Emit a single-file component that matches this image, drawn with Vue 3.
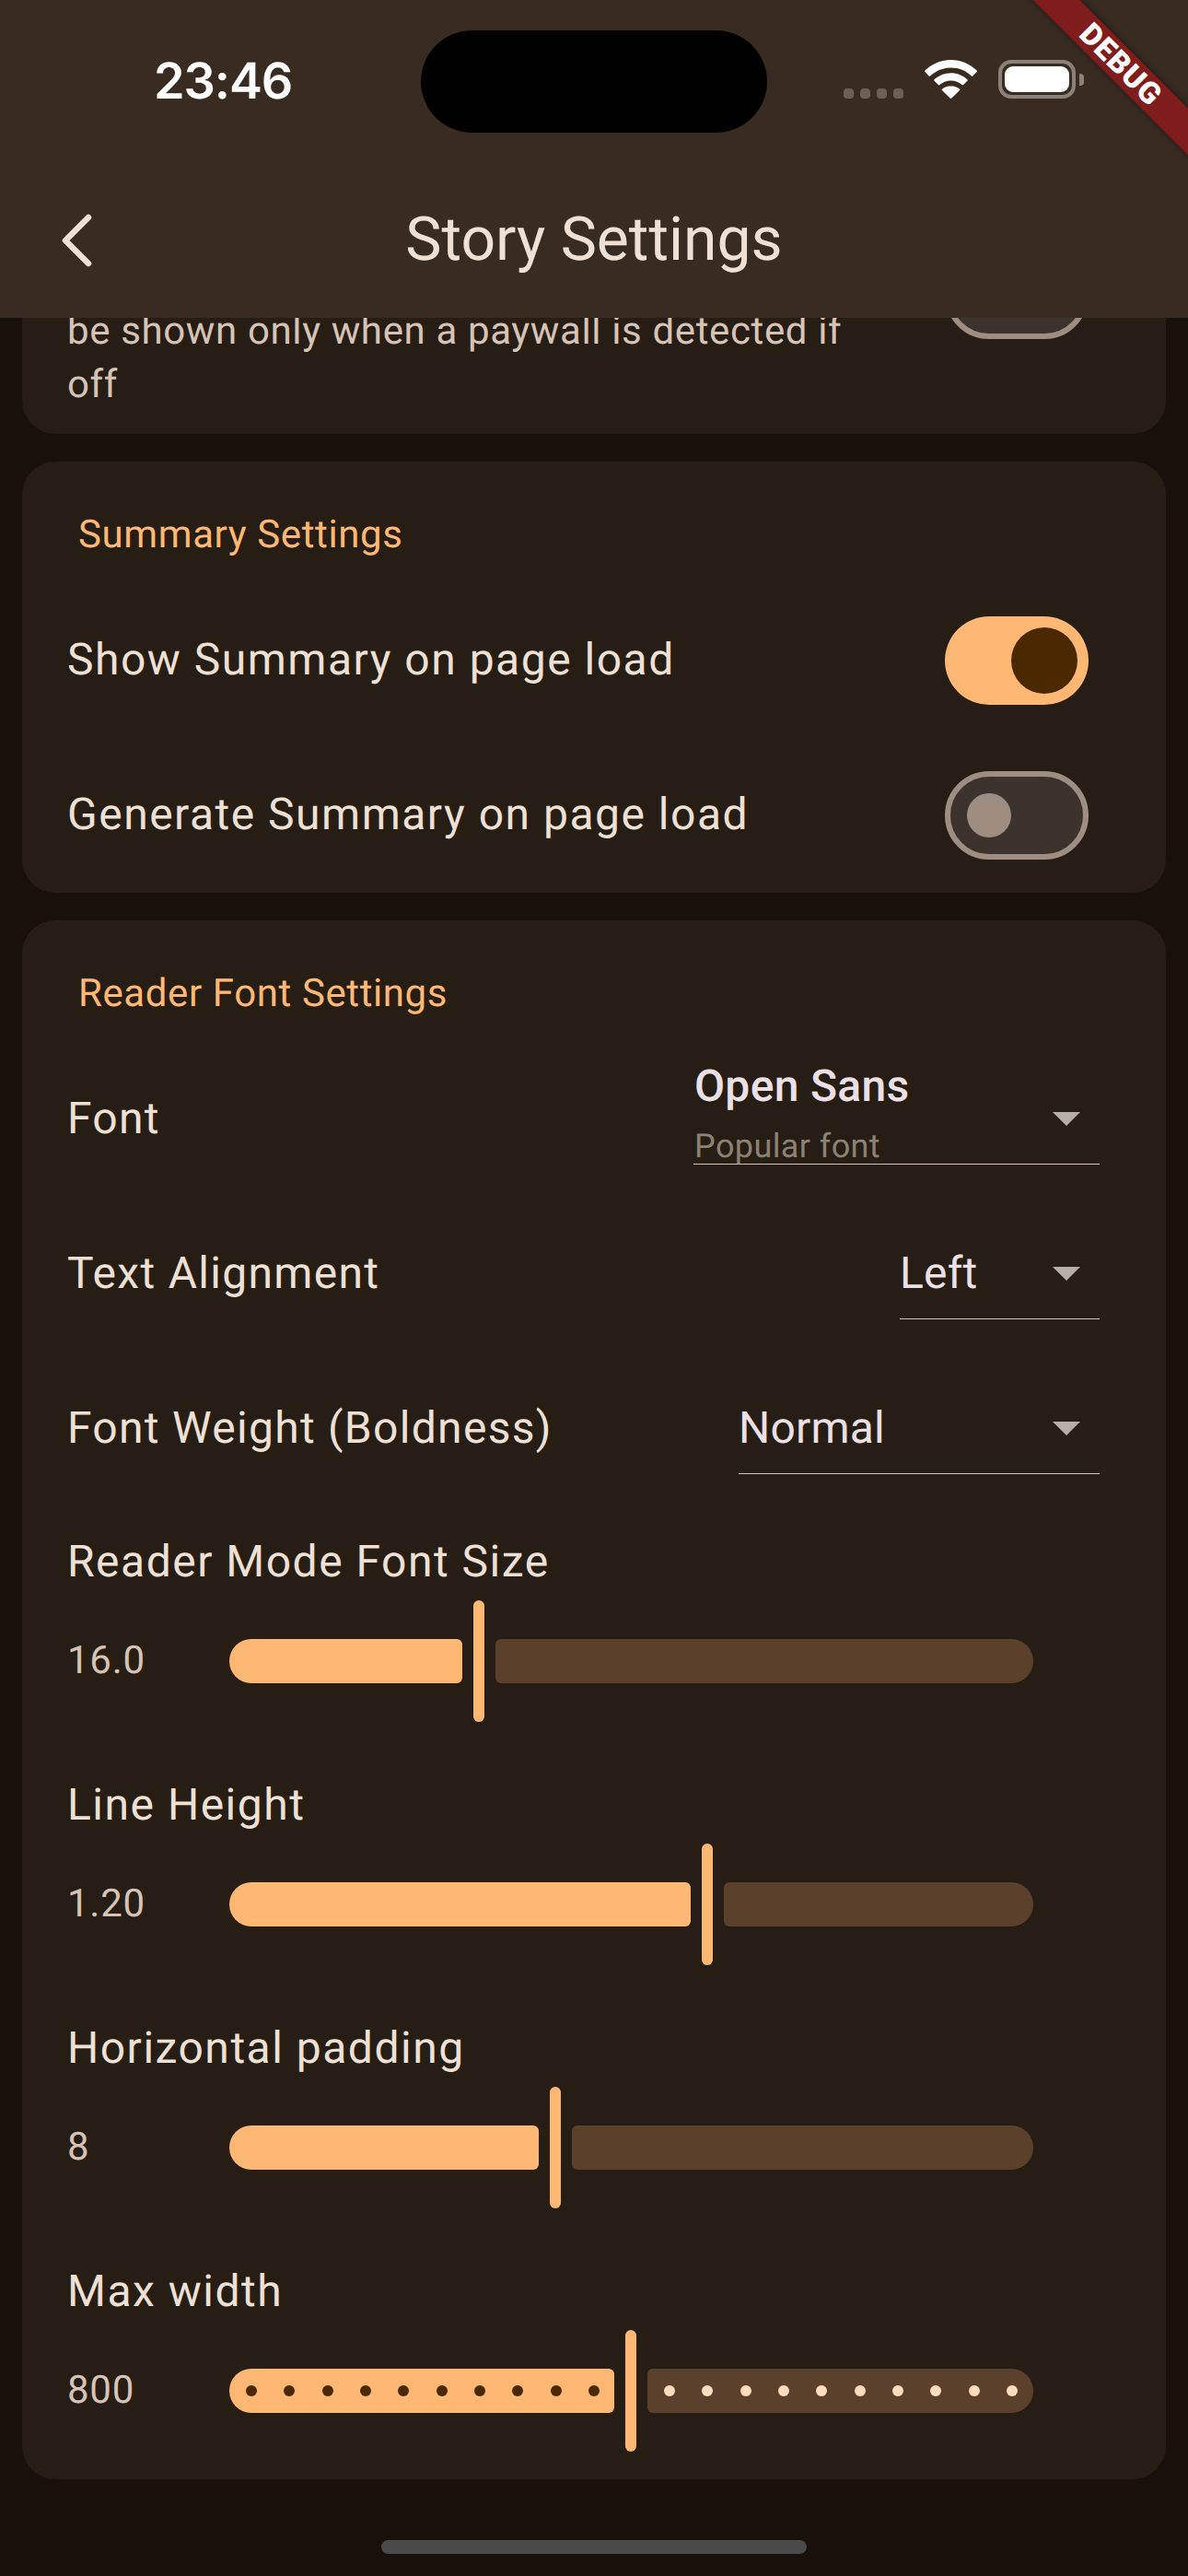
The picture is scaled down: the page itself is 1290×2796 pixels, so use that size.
<template>
  <div class="phone">
    <header class="appbar">
      <div class="statusbar">
        <span class="time">23:46</span>
        <div class="island"></div>
        <div class="status-icons">
          <div class="signal">
            <i v-for="n in 4" :key="n"></i>
          </div>
          <svg class="wifi" width="57" height="42" viewBox="0 0 57 42">
            <path fill="#fff" d="M28.5 0C17.6 0 7.8 4.3.4 11.5c-.5.5-.5 1 0 1.500l4.200 4.400c.4.400 1 .4 1.500 0C12 11.800 19.900 8.500 28.500 8.500s16.500 3.300 22.400 8.900c.5.4 1.100.4 1.500 0l4.200-4.400c.5-.5.500-1 0-1.500C49.200 4.300 39.400 0 28.500 0z" />
            <path fill="#fff" d="M28.500 14.200c-6.900 0-13.200 2.700-17.900 7-.5.500-.5 1 0 1.500l4.300 4.400c.4.400 1 .4 1.500 0 3.200-2.900 7.400-4.600 12.100-4.600s8.900 1.700 12.100 4.600c.5.400 1.100.4 1.500 0l4.300-4.400c.5-.5.500-1 0-1.500-4.700-4.300-11-7-17.900-7z" />
            <path fill="#fff" d="M28.500 28.200c-3.700 0-7 1.300-9.600 3.500-.5.4-.5 1 0 1.400l8.700 8.500c.5.500 1.300.5 1.800 0l8.700-8.500c.5-.4.500-1 0-1.400-2.600-2.200-5.900-3.500-9.600-3.500z" />
          </svg>
          <div class="battery">
            <div class="battery-body"><div class="battery-fill"></div></div>
            <div class="battery-cap"></div>
          </div>
        </div>
      </div>
      <div class="titlebar">
        <svg class="back" width="36" height="62" viewBox="0 0 36 62">
          <path d="M31 6 L6 31 L31 56" fill="none" stroke="#f0e0d4" stroke-width="6.500" stroke-linecap="round" stroke-linejoin="round" />
        </svg>
        <h1 class="title">Story Settings</h1>
      </div>
    </header>

    <main class="scroller">
      <div class="list">
        <section class="card card-clipped">
          <p class="subtitle">be shown only when a paywall is detected if off</p>
          <div class="switch off switch-clipped"><span class="thumb"></span></div>
        </section>

        <section class="card">
          <h2 class="section-title">Summary Settings</h2>
          <div class="row" v-for="item in summaryRows" :key="item.label">
            <span class="label">{{ item.label }}</span>
            <div class="switch" :class="item.on ? 'on' : 'off'"><span class="thumb"></span></div>
          </div>
        </section>

        <section class="card">
          <h2 class="section-title">Reader Font Settings</h2>

          <div class="row row-select">
            <span class="label">Font</span>
            <div class="select select-font">
              <div class="select-text">
                <span class="select-name">Open Sans</span>
                <span class="select-hint">Popular font</span>
              </div>
              <span class="caret"></span>
            </div>
          </div>
          <div class="row row-select">
            <span class="label">Text Alignment</span>
            <div class="select select-align">
              <span class="select-value">Left</span>
              <span class="caret"></span>
            </div>
          </div>
          <div class="row row-select">
            <span class="label">Font Weight (Boldness)</span>
            <div class="select select-weight">
              <span class="select-value">Normal</span>
              <span class="caret"></span>
            </div>
          </div>

          <div class="sliders">
            <div class="slider-block" v-for="s in sliders" :key="s.label">
              <div class="label">{{ s.label }}</div>
              <div class="slider-row">
                <span class="value">{{ s.value }}</span>
                <div class="slider">
                  <div class="track active" :style="{ width: s.active + 'px' }">
                    <i v-for="n in s.dots" :key="n"></i>
                  </div>
                  <div class="handle"></div>
                  <div class="track rest">
                    <i v-for="n in s.dots" :key="n"></i>
                  </div>
                </div>
              </div>
            </div>
          </div>
        </section>
      </div>
    </main>

    <div class="home-bar"></div>
    <div class="debug-banner"><span>DEBUG</span></div>
  </div>
</template>

<script setup>
const summaryRows = [
  { label: 'Show Summary on page load', on: true },
  { label: 'Generate Summary on page load', on: false }
]

const sliders = [
  { label: 'Reader Mode Font Size', value: '16.0', active: 253, dots: 0 },
  { label: 'Line Height', value: '1.20', active: 501, dots: 0 },
  { label: 'Horizontal padding', value: '8', active: 336, dots: 0 },
  { label: 'Max width', value: '800', active: 418, dots: 10 }
]
</script>

<style>
html, body {
  margin: 0;
  background: #18110b;
}
</style>

<style scoped>
.phone {
  position: relative;
  width: 1290px;
  height: 2796px;
  overflow: hidden;
  display: flex;
  flex-direction: column;
  background: #18110b;
  font-family: Roboto, "Noto Sans", sans-serif;
  color: #efe0d5;
  text-rendering: geometricPrecision;
}

.appbar {
  height: 345px;
  flex: none;
  background: #382c22;
  position: relative;
  z-index: 2;
}

.statusbar {
  height: 177px;
  padding: 33px 113px 0 167px;
  box-sizing: border-box;
  display: flex;
  align-items: flex-start;
}

.time {
  width: 290px;
  margin-top: 23px;
  font-family: Inter, sans-serif;
  font-size: 54px;
  line-height: 66px;
  font-weight: 600;
  letter-spacing: -1.1px;
  color: #fff;
}

.island {
  width: 376px;
  height: 111px;
  border-radius: 56px;
  background: #000;
  flex: none;
}

.status-icons {
  display: flex;
  align-items: flex-end;
  margin: 32px 0 0 83px;
  height: 42px;
}

.signal {
  display: flex;
  gap: 7px;
  width: 88px;
}

.signal i {
  width: 11px;
  height: 11px;
  border-radius: 4px;
  background: #6a6058;
}

.wifi {
  display: block;
  margin-right: 23px;
}

.battery {
  display: flex;
  align-items: center;
  height: 42px;
}

.battery-body {
  width: 84px;
  height: 42px;
  box-sizing: border-box;
  border: 4px solid #8a827a;
  border-radius: 14px;
  padding: 3px;
}

.battery-fill {
  height: 100%;
  background: #fff;
  border-radius: 9px;
}

.battery-cap {
  width: 5px;
  height: 13px;
  margin-left: 4px;
  background: #8a827a;
  border-radius: 0 4px 4px 0;
}

.titlebar {
  height: 168px;
  position: relative;
  display: flex;
  align-items: center;
  justify-content: center;
}

.back {
  position: absolute;
  left: 65px;
  top: 53px;
}

.title {
  margin: 0;
  font-size: 66px;
  line-height: 88px;
  font-weight: 400;
  color: #f0e0d4;
}

.scroller {
  flex: 1;
  overflow: hidden;
}

.list {
  margin-top: -113px;
  padding: 0 24px;
  display: flex;
  flex-direction: column;
  gap: 30px;
}

.card {
  background: #261d14;
  border-radius: 36px;
}

.card-clipped {
  height: 238.67px;
  padding: 99px 84px 0 49px;
  box-sizing: border-box;
  display: flex;
  justify-content: space-between;
  align-items: flex-start;
}

.subtitle {
  margin: 0;
  width: 860px;
  font-size: 42px;
  line-height: 58px;
  letter-spacing: 0.63px;
  color: #d6c3b5;
}

.switch-clipped {
  margin-top: -59px;
}

.section-title {
  margin: 0;
  padding: 53px 0 0 61px;
  height: 79px;
  font-size: 42px;
  line-height: 54px;
  font-weight: 400;
  letter-spacing: 0.6px;
  color: #ffb874;
}

.row {
  height: 168px;
  padding: 0 84px 0 49px;
  display: flex;
  align-items: center;
  justify-content: space-between;
}

.label {
  font-size: 48px;
  line-height: 64px;
  padding-bottom: 2px;
  letter-spacing: 1.5px;
  color: #efe0d5;
}

.row-select .label {
  letter-spacing: 1.3px;
}

.switch {
  width: 156px;
  height: 96px;
  box-sizing: border-box;
  border-radius: 48px;
  flex: none;
  display: flex;
  align-items: center;
}

.switch.on {
  background: #ffb874;
  justify-content: flex-end;
  padding-right: 12px;
}

.switch.on .thumb {
  width: 72px;
  height: 72px;
  background: #4a2800;
}

.switch.off {
  background: #3c332c;
  border: 6px solid #9e8e81;
  padding-left: 18px;
}

.switch.off .thumb {
  width: 48px;
  height: 48px;
  background: #9e8e81;
}

.thumb {
  border-radius: 50%;
}

.row-select {
  padding-right: 72px;
}

.select {
  height: 98px;
  box-sizing: border-box;
  border-bottom: 1px solid #d6c3b5;
  display: flex;
  align-items: center;
  justify-content: space-between;
  padding-right: 21px;
  color: #ebe0e6;
}

.select-font {
  width: 441px;
  padding-left: 1px;
}

.select-align {
  width: 217px;
}

.select-weight {
  width: 392px;
}

.select-text {
  display: flex;
  flex-direction: column;
  margin-top: -5px;
}

.select-name {
  font-size: 48px;
  line-height: 64px;
  font-weight: 500;
  letter-spacing: 0.3px;
}

.select-hint {
  font-size: 36px;
  line-height: 66px;
  letter-spacing: 0.4px;
  color: #8c8274;
}

.select-value {
  font-size: 48px;
  line-height: 64px;
  letter-spacing: 0.2px;
}

.caret {
  width: 0;
  height: 0;
  border-left: 15px solid transparent;
  border-right: 15px solid transparent;
  border-top: 15px solid #b5b0a8;
}

.sliders {
  padding: 28px 0 30px 49px;
  display: flex;
  flex-direction: column;
  gap: 58px;
}

.slider-row {
  display: flex;
  align-items: center;
  height: 132px;
  margin-top: 8px;
}

.value {
  width: 176px;
  flex: none;
  font-size: 42px;
  line-height: 56px;
  letter-spacing: 0.75px;
  color: #d6c3b5;
}

.slider {
  width: 873px;
  display: flex;
  align-items: center;
  gap: 12px;
}

.track {
  height: 48px;
  box-sizing: border-box;
  display: flex;
  align-items: center;
  gap: 29.33px;
}

.track i {
  width: 12px;
  height: 12px;
  border-radius: 50%;
  flex: none;
}

.track.active {
  flex: none;
  background: #ffb874;
  border-radius: 24px 6px 6px 24px;
  padding-left: 18px;
}

.track.active i {
  background: #4a2800;
}

.track.rest {
  flex: 1;
  background: #5b412c;
  border-radius: 6px 24px 24px 6px;
  padding-left: 18px;
}

.track.rest i {
  background: #ffdcbe;
}

.handle {
  width: 12px;
  height: 132px;
  border-radius: 6px;
  background: #ffb874;
  flex: none;
}

.home-bar {
  position: absolute;
  left: 414px;
  bottom: 24px;
  width: 462px;
  height: 15px;
  border-radius: 8px;
  background: #4b4b4b;
}

.debug-banner {
  position: absolute;
  z-index: 3;
  left: 1037px;
  top: 52px;
  width: 360px;
  height: 36px;
  transform: rotate(45deg);
  background: #7f1c1c;
  box-shadow: 0 0 6px rgba(0, 0, 0, 0.5);
  display: flex;
  align-items: center;
  justify-content: center;
  color: #fff;
  font-weight: 900;
  font-size: 33px;
  letter-spacing: 1px;
}
</style>
